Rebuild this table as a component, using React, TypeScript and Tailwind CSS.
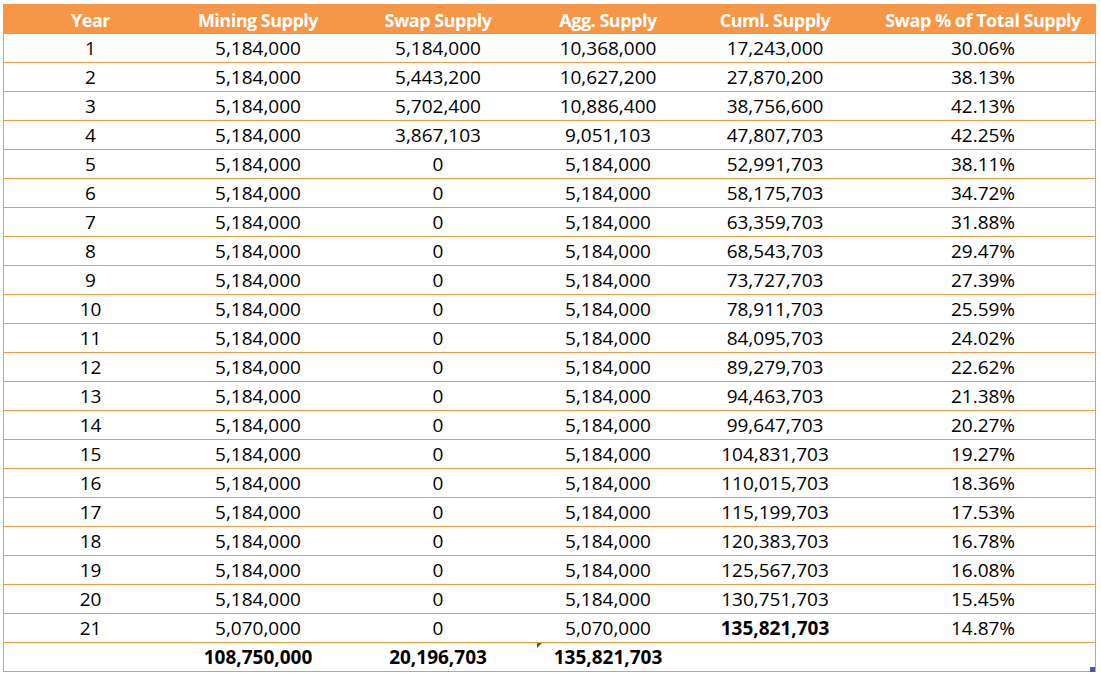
import React from "react";

const rows: [string, string, string, string, string, string][] = [
  ["1", "5,184,000", "5,184,000", "10,368,000", "17,243,000", "30.06%"],
  ["2", "5,184,000", "5,443,200", "10,627,200", "27,870,200", "38.13%"],
  ["3", "5,184,000", "5,702,400", "10,886,400", "38,756,600", "42.13%"],
  ["4", "5,184,000", "3,867,103", "9,051,103", "47,807,703", "42.25%"],
  ["5", "5,184,000", "0", "5,184,000", "52,991,703", "38.11%"],
  ["6", "5,184,000", "0", "5,184,000", "58,175,703", "34.72%"],
  ["7", "5,184,000", "0", "5,184,000", "63,359,703", "31.88%"],
  ["8", "5,184,000", "0", "5,184,000", "68,543,703", "29.47%"],
  ["9", "5,184,000", "0", "5,184,000", "73,727,703", "27.39%"],
  ["10", "5,184,000", "0", "5,184,000", "78,911,703", "25.59%"],
  ["11", "5,184,000", "0", "5,184,000", "84,095,703", "24.02%"],
  ["12", "5,184,000", "0", "5,184,000", "89,279,703", "22.62%"],
  ["13", "5,184,000", "0", "5,184,000", "94,463,703", "21.38%"],
  ["14", "5,184,000", "0", "5,184,000", "99,647,703", "20.27%"],
  ["15", "5,184,000", "0", "5,184,000", "104,831,703", "19.27%"],
  ["16", "5,184,000", "0", "5,184,000", "110,015,703", "18.36%"],
  ["17", "5,184,000", "0", "5,184,000", "115,199,703", "17.53%"],
  ["18", "5,184,000", "0", "5,184,000", "120,383,703", "16.78%"],
  ["19", "5,184,000", "0", "5,184,000", "125,567,703", "16.08%"],
  ["20", "5,184,000", "0", "5,184,000", "130,751,703", "15.45%"],
  ["21", "5,070,000", "0", "5,070,000", "135,821,703", "14.87%"],
];

const headers = ["Year", "Mining Supply", "Swap Supply", "Agg. Supply", "Cuml. Supply", "Swap % of Total Supply"];

const grid = "grid grid-cols-[173px_162px_198px_142px_192px_224px]";

export default function App() {
  return (
    <div className="w-[1101px] h-[676px] bg-white pl-[3px] pt-[4px] text-[19px] text-black" style={{ fontFamily: '"Open Sans", "Liberation Sans", sans-serif' }}>
      <div className="w-[1093px] border-x border-[#f79646]">
        <div className={`${grid} h-[30px] bg-[#f79646] text-white font-bold text-[18px] pt-[2px]`}>
          {headers.map((h) => (
            <div key={h} className="flex items-center justify-center whitespace-nowrap tracking-[-0.5px]">{h}</div>
          ))}
        </div>
        {rows.map((r, i) => (
          <div key={i} className={`${grid} h-[29px] border-b border-[#f79646]`}>
            {r.map((c, j) => (
              <div key={j} className={`flex items-center justify-center ${i === 20 && j === 4 ? "font-bold" : ""}`}>{c}</div>
            ))}
          </div>
        ))}
        <div className={`${grid} h-[29px] border-b border-[#f79646] font-bold`}>
          <div></div>
          <div className="flex items-center justify-center">108,750,000</div>
          <div className="flex items-center justify-center">20,196,703</div>
          <div className="relative flex items-center justify-center">
            <div className="absolute left-0 top-0 w-0 h-0 border-t-[5px] border-r-[5px] border-t-[#1e7d1e] border-r-transparent"></div>
            135,821,703
          </div>
          <div></div>
          <div className="relative">
            <div className="absolute right-0 bottom-0 w-[5px] h-[5px] bg-[#4a55ad]"></div>
          </div>
        </div>
      </div>
    </div>
  );
}
